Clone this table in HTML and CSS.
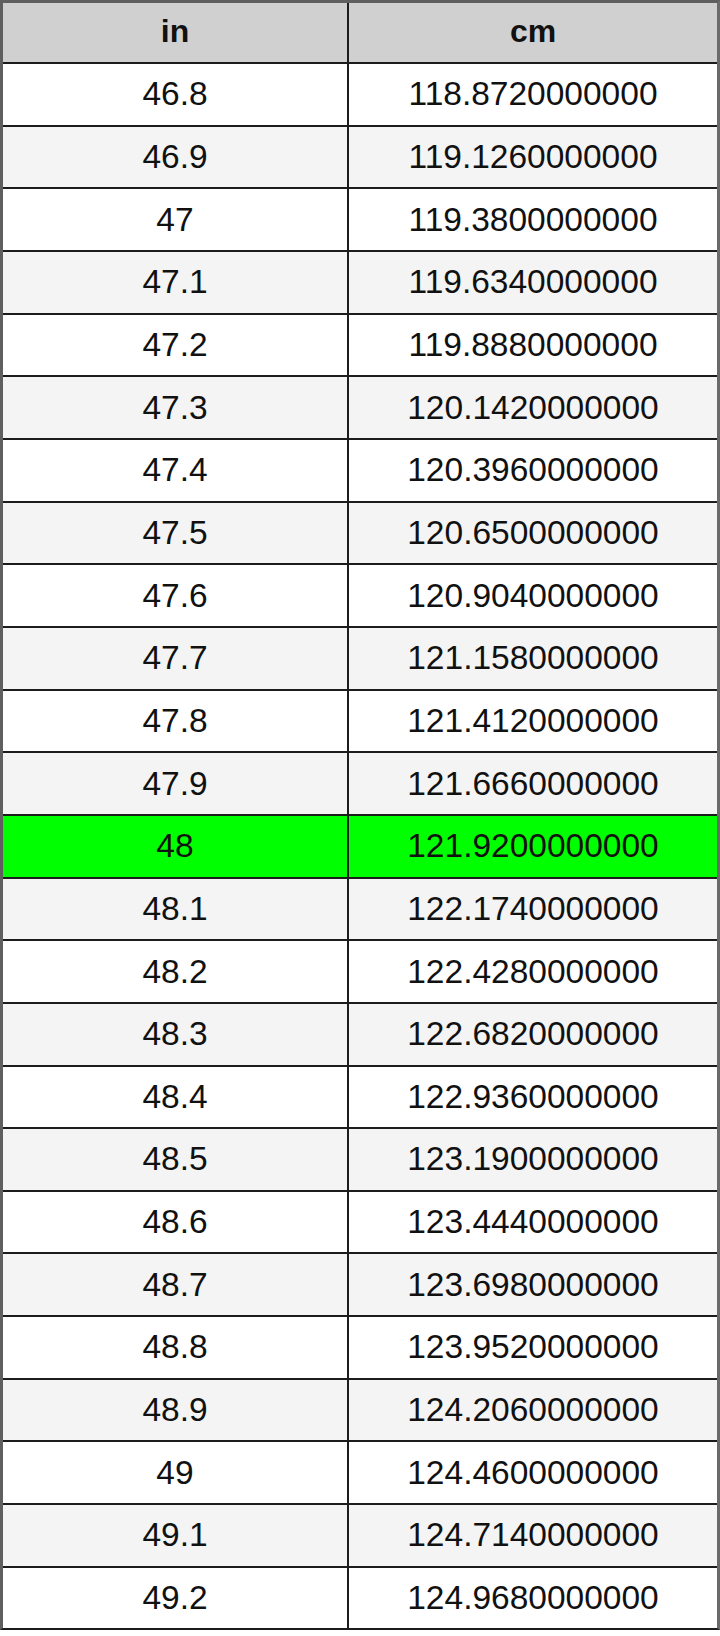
FILE: index.html
```html
<!DOCTYPE html>
<html>
<head>
<meta charset="utf-8">
<link rel="stylesheet" href="styles.css">
</head>
<body>
<div class="table">
  <div class="row head"><div class="cell">in</div><div class="cell">cm</div></div>
  <div class="row"><div class="cell">46.8</div><div class="cell">118.8720000000</div></div>
  <div class="row alt"><div class="cell">46.9</div><div class="cell">119.1260000000</div></div>
  <div class="row"><div class="cell">47</div><div class="cell">119.3800000000</div></div>
  <div class="row alt"><div class="cell">47.1</div><div class="cell">119.6340000000</div></div>
  <div class="row"><div class="cell">47.2</div><div class="cell">119.8880000000</div></div>
  <div class="row alt"><div class="cell">47.3</div><div class="cell">120.1420000000</div></div>
  <div class="row"><div class="cell">47.4</div><div class="cell">120.3960000000</div></div>
  <div class="row alt"><div class="cell">47.5</div><div class="cell">120.6500000000</div></div>
  <div class="row"><div class="cell">47.6</div><div class="cell">120.9040000000</div></div>
  <div class="row alt"><div class="cell">47.7</div><div class="cell">121.1580000000</div></div>
  <div class="row"><div class="cell">47.8</div><div class="cell">121.4120000000</div></div>
  <div class="row alt"><div class="cell">47.9</div><div class="cell">121.6660000000</div></div>
  <div class="row hl"><div class="cell">48</div><div class="cell">121.9200000000</div></div>
  <div class="row alt"><div class="cell">48.1</div><div class="cell">122.1740000000</div></div>
  <div class="row"><div class="cell">48.2</div><div class="cell">122.4280000000</div></div>
  <div class="row alt"><div class="cell">48.3</div><div class="cell">122.6820000000</div></div>
  <div class="row"><div class="cell">48.4</div><div class="cell">122.9360000000</div></div>
  <div class="row alt"><div class="cell">48.5</div><div class="cell">123.1900000000</div></div>
  <div class="row"><div class="cell">48.6</div><div class="cell">123.4440000000</div></div>
  <div class="row alt"><div class="cell">48.7</div><div class="cell">123.6980000000</div></div>
  <div class="row"><div class="cell">48.8</div><div class="cell">123.9520000000</div></div>
  <div class="row alt"><div class="cell">48.9</div><div class="cell">124.2060000000</div></div>
  <div class="row"><div class="cell">49</div><div class="cell">124.4600000000</div></div>
  <div class="row alt"><div class="cell">49.1</div><div class="cell">124.7140000000</div></div>
  <div class="row"><div class="cell">49.2</div><div class="cell">124.9680000000</div></div>
</div>
</body>
</html>
```
FILE: styles.css
```css
html, body {
  margin: 0;
  padding: 0;
  background: #ffffff;
}
.table {
  width: 720px;
  box-sizing: border-box;
  border-top: 3px solid #5f5f5f;
  border-left: 3px solid #5f5f5f;
  border-right: 3px solid #6a6a6a;
  border-bottom: 2px solid #1c1c1c;
  font-family: "Liberation Sans", Arial, sans-serif;
  color: #111111;
}
.row {
  display: grid;
  grid-template-columns: 346px 1fr;
  height: 60.67px;
  border-top: 2px solid #1c1c1c;
  background: #ffffff;
}
.row.alt {
  background: #f4f4f4;
}
.row.hl {
  background: #00ff00;
}
.row.head {
  height: 59px;
  border-top: none;
  background: #d0d0d0;
  font-weight: bold;
}
.cell {
  display: flex;
  align-items: center;
  justify-content: center;
  font-size: 33.5px;
}
.head .cell {
  font-size: 32px;
  padding-bottom: 2px;
}
.cell:first-child {
  border-right: 2px solid #1c1c1c;
}
```
